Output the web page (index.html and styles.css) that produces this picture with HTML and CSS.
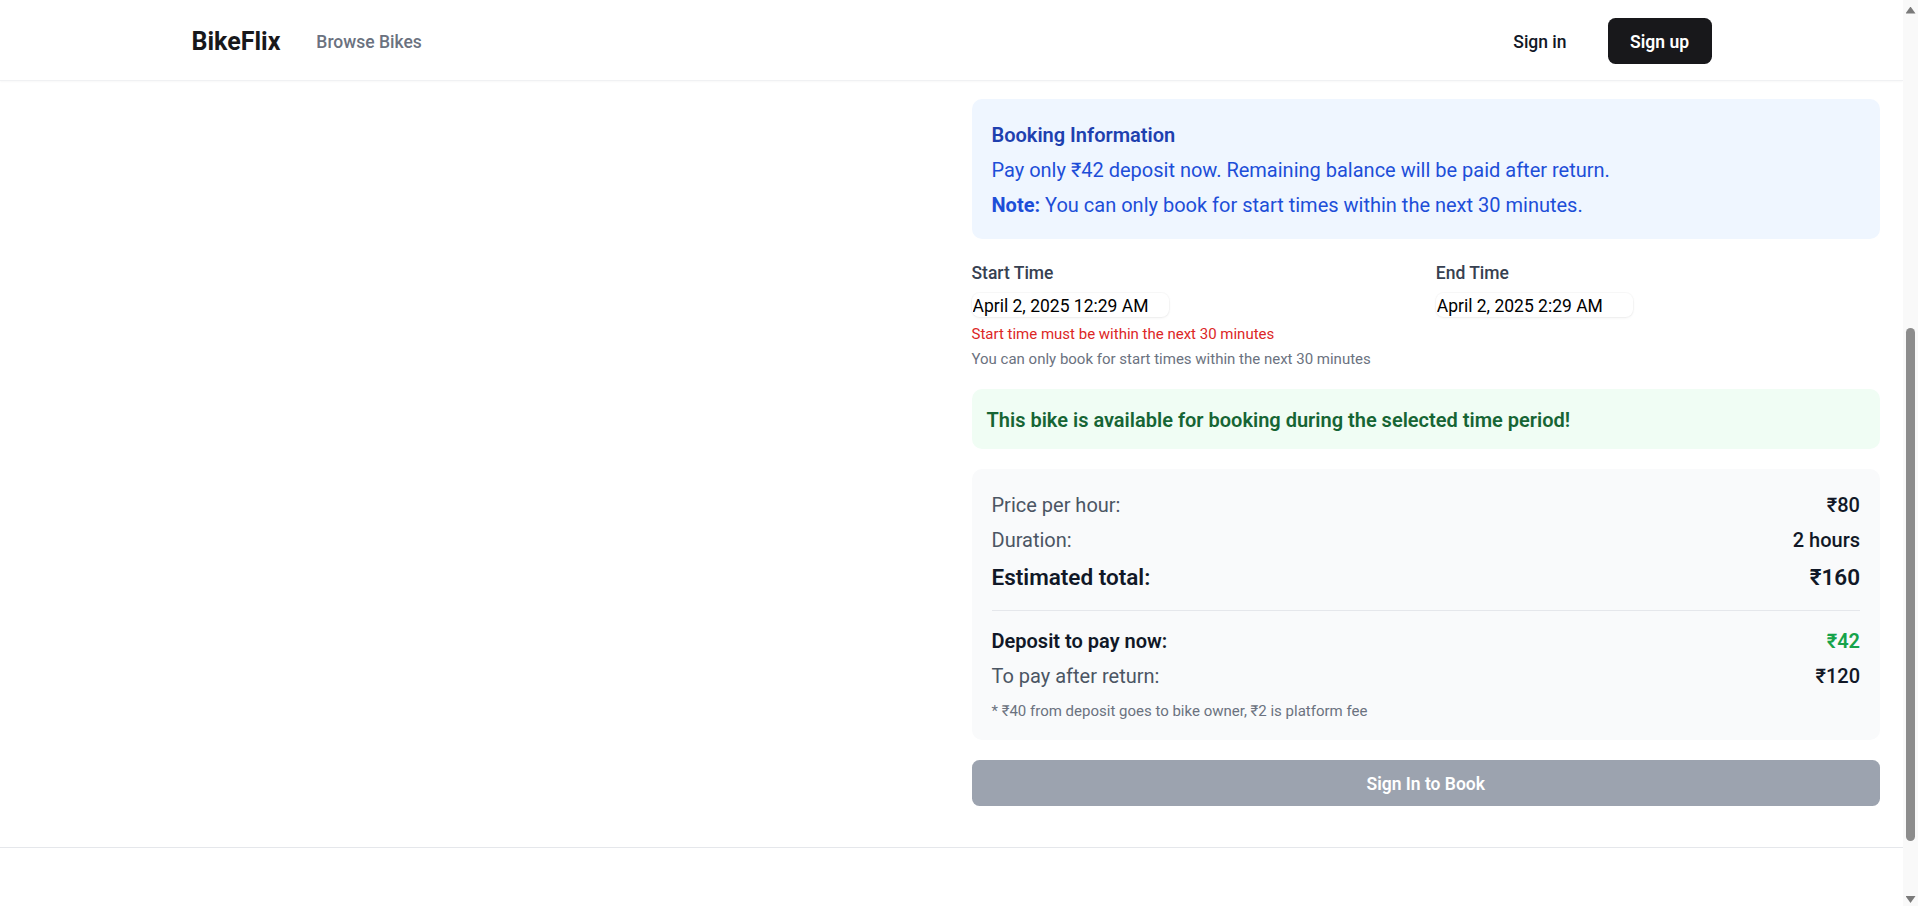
FILE: index.html
```html
<!DOCTYPE html>
<html lang="en">
<head>
<meta charset="utf-8">
<title>BikeFlix</title>
<link rel="stylesheet" href="styles.css">
</head>
<body>
<div class="viewport">
  <div class="page">
    <header class="site-header">
      <div class="header-inner">
        <div class="brand-group">
          <a class="brand" href="#">BikeFlix</a>
          <a class="nav-link" href="#">Browse Bikes</a>
        </div>
        <div class="auth">
          <a class="signin" href="#">Sign in</a>
          <a class="signup" href="#">Sign up</a>
        </div>
      </div>
    </header>

    <main class="main">
      <div class="layout">
        <div class="left-col"></div>
        <div class="right-col">
          <section class="info-box">
            <h3 class="info-title">Booking Information</h3>
            <p class="info-text">Pay only ₹42 deposit now. Remaining balance will be paid after return.</p>
            <p class="info-text"><strong>Note:</strong> You can only book for start times within the next 30 minutes.</p>
          </section>

          <div class="times">
            <div class="field">
              <label class="field-label">Start Time</label>
              <input class="date-input" type="text" value="April 2, 2025 12:29 AM" readonly>
              <p class="field-error">Start time must be within the next 30 minutes</p>
              <p class="field-help">You can only book for start times within the next 30 minutes</p>
            </div>
            <div class="field">
              <label class="field-label">End Time</label>
              <input class="date-input" type="text" value="April 2, 2025 2:29 AM" readonly>
            </div>
          </div>

          <div class="available">This bike is available for booking during the selected time period!</div>

          <div class="price-box">
            <div class="row">
              <span class="row-label">Price per hour:</span>
              <span class="row-value">₹80</span>
            </div>
            <div class="row gap">
              <span class="row-label">Duration:</span>
              <span class="row-value">2 hours</span>
            </div>
            <div class="row gap total">
              <span>Estimated total:</span>
              <span>₹160</span>
            </div>
            <div class="deposit-block">
              <div class="row deposit">
                <span>Deposit to pay now:</span>
                <span class="deposit-value">₹42</span>
              </div>
              <div class="row gap">
                <span class="row-label">To pay after return:</span>
                <span class="row-value">₹120</span>
              </div>
              <p class="footnote">* ₹40 from deposit goes to bike owner, ₹2 is platform fee</p>
            </div>
          </div>

          <button class="book-btn" type="button">Sign In to Book</button>
        </div>
      </div>
    </main>

    <footer class="site-footer"></footer>
  </div>

  <div class="scrollbar">
    <div class="sb-btn sb-btn-top">
      <div class="sb-arrow sb-arrow-up"></div>
    </div>
    <div class="sb-track"><div class="sb-thumb"></div></div>
    <div class="sb-btn sb-btn-bottom">
      <div class="sb-arrow sb-arrow-down"></div>
    </div>
  </div>
</div>
</body>
</html>
```

FILE: styles.css
```css
* {
  box-sizing: border-box;
}

html, body {
  margin: 0;
  padding: 0;
  height: 100%;
  overflow: hidden;
  background: #ffffff;
}

body {
  font-family: Roboto, "Segoe UI", "Noto Sans", Arial, sans-serif;
  color: #111827;
}

a {
  text-decoration: none;
}

.viewport {
  display: flex;
  height: 100vh;
}

.page {
  flex: 1;
  min-width: 0;
  display: flex;
  flex-direction: column;
  overflow: hidden;
}

/* Header */
.site-header {
  height: 81px;
  flex: none;
  background: #ffffff;
  border-bottom: 1px solid #f0f1f3;
  box-shadow: 0 1px 2px rgba(0, 0, 0, 0.03);
}

.header-inner {
  max-width: 1600px;
  height: 80px;
  margin: 0 auto;
  padding: 1px 40px 0;
  display: flex;
  align-items: center;
  justify-content: space-between;
}

.brand-group {
  display: flex;
  align-items: center;
  gap: 36px;
  padding-top: 3px;
}

.brand {
  font-size: 25px;
  font-weight: 700;
  color: #18181b;
  line-height: 30px;
}

.nav-link {
  font-size: 17.5px;
  font-weight: 500;
  color: #6b7280;
  line-height: 25px;
}

.auth {
  display: flex;
  align-items: center;
  gap: 21px;
}

.signin {
  font-size: 17.5px;
  font-weight: 500;
  color: #111827;
  line-height: 25px;
  padding: 13px 20px 9px;
}

.signup {
  font-size: 17.5px;
  font-weight: 600;
  color: #ffffff;
  background: #18181b;
  line-height: 26px;
  padding: 11px 22.5px 9px;
  border-radius: 7.5px;
}

/* Main */
.main {
  flex: none;
  padding: 18px 23px 41px;
}

.layout {
  display: grid;
  grid-template-columns: 1fr 1fr;
  gap: 40px;
}

.right-col {
  display: flex;
  flex-direction: column;
  gap: 20px;
}

.info-box {
  background: #eff6ff;
  border-radius: 10px;
  padding: 21px 20px 19px;
}

.info-title {
  margin: 0;
  font-size: 20px;
  line-height: 30px;
  font-weight: 600;
  color: #1e40af;
}

.info-text {
  margin: 5px 0 0;
  font-size: 20px;
  line-height: 30px;
  color: #1d4ed8;
}

.info-text strong {
  font-weight: 700;
}

.times {
  display: grid;
  grid-template-columns: 1fr 1fr;
  gap: 20px;
}

.field-label {
  display: block;
  font-size: 17.5px;
  line-height: 25px;
  font-weight: 500;
  color: #374151;
  padding-top: 2px;
  margin-bottom: 7px;
}

.date-input {
  display: block;
  width: 197px;
  height: 24px;
  padding: 1px 1px 0;
  border: none;
  outline: none;
  border-radius: 7.5px;
  background: #ffffff;
  box-shadow: 0 0 0 1px rgba(0, 0, 0, 0.025), 0 1px 3px rgba(0, 0, 0, 0.06);
  font-family: Roboto, "Segoe UI", Arial, sans-serif;
  font-size: 17.5px;
  color: #000000;
}

.field-error {
  margin: 7px 0 0;
  font-size: 15px;
  line-height: 20px;
  color: #dc2626;
}

.field-help {
  margin: 5px 0 0;
  font-size: 15px;
  line-height: 20px;
  color: #6b7280;
}

.available {
  background: #f0fdf4;
  border-radius: 10px;
  padding: 16px 15px 14px;
  font-size: 20px;
  line-height: 30px;
  font-weight: 600;
  color: #166534;
}

.price-box {
  background: #f9fafb;
  border-radius: 10px;
  padding: 21px 20px 19px;
}

.row {
  display: flex;
  justify-content: space-between;
  align-items: center;
  font-size: 20px;
  line-height: 30px;
}

.row.gap {
  margin-top: 5px;
}

.row-label {
  color: #4b5563;
}

.row-value {
  font-weight: 500;
  color: #111827;
}

.row.total {
  font-size: 22.5px;
  line-height: 35px;
  font-weight: 600;
  color: #111827;
}

.deposit-block {
  margin-top: 15px;
  padding-top: 15px;
  border-top: 1px solid #e5e7eb;
}

.row.deposit {
  font-weight: 600;
  color: #111827;
}

.deposit-value {
  color: #16a34a;
}

.footnote {
  margin: 10px 0 0;
  font-size: 15px;
  line-height: 20px;
  color: #6b7280;
}

.book-btn {
  display: block;
  width: 100%;
  height: 46px;
  border: none;
  border-radius: 7.5px;
  background: #9ca3af;
  color: #ffffff;
  font-family: Roboto, "Segoe UI", Arial, sans-serif;
  font-size: 17.5px;
  font-weight: 600;
  padding-top: 2px;
}

.site-footer {
  flex: 1;
  border-top: 1px solid #e5e7eb;
  background: #ffffff;
}

/* Scrollbar */
.scrollbar {
  width: 15px;
  flex: none;
  display: flex;
  flex-direction: column;
  background: #f9f9f9;
}

.sb-btn {
  width: 15px;
  display: flex;
  align-items: center;
  justify-content: center;
  flex: none;
}

.sb-btn-top {
  height: 20px;
}

.sb-btn-bottom {
  height: 13px;
  margin-top: auto;
}

.sb-arrow {
  width: 10px;
  height: 7px;
  background: #7a7a7a;
}

.sb-arrow-up {
  clip-path: polygon(50% 0, 100% 100%, 0 100%);
}

.sb-arrow-down {
  clip-path: polygon(0 0, 100% 0, 50% 100%);
}

.sb-track {
  flex: 1;
  width: 15px;
  display: flex;
  justify-content: center;
}

.sb-thumb {
  width: 9px;
  height: 513px;
  margin-top: 308px;
  border-radius: 4.5px;
  background: #8c8c8c;
}
```
